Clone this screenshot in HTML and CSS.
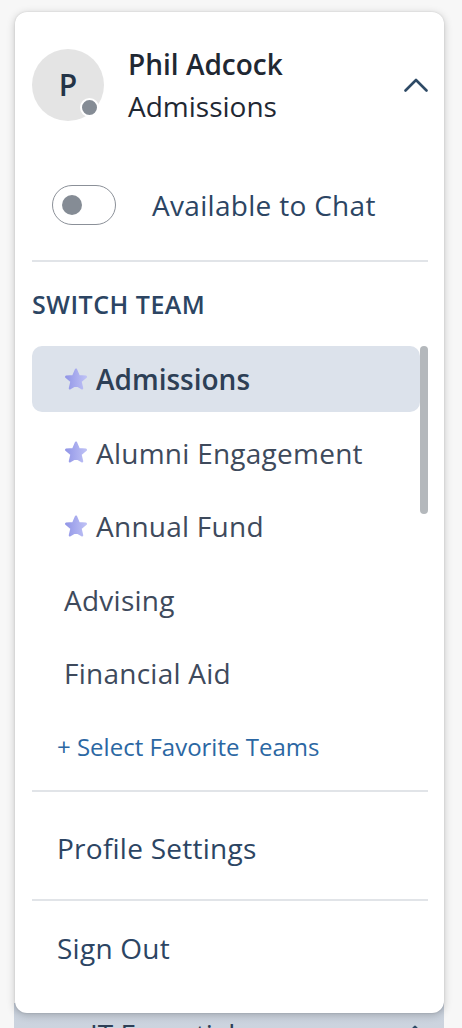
FILE: index.html
```html
<!DOCTYPE html>
<html lang="en">
<head>
<meta charset="utf-8">
<title>Profile menu</title>
<link rel="stylesheet" href="styles.css">
</head>
<body>
<svg class="defs" width="0" height="0" aria-hidden="true">
  <defs>
    <linearGradient id="starGrad" x1="0" y1="0" x2="1" y2="0">
      <stop offset="0" stop-color="#9397e7"/>
      <stop offset="1" stop-color="#bdc0f5"/>
    </linearGradient>
  </defs>
</svg>
<div class="app">
  <div class="menu">
    <div class="profile">
      <div class="avatar">P<span class="status"></span></div>
      <div class="who">
        <div class="name">Phil Adcock</div>
        <div class="team">Admissions</div>
      </div>
      <svg class="chevron" width="24" height="14" viewBox="0 0 24 14"><polyline points="1.5,12.5 12,2 22.5,12.5" fill="none" stroke="#2e4a66" stroke-width="2.6" stroke-linecap="round" stroke-linejoin="round"/></svg>
    </div>

    <div class="chat-row">
      <span class="toggle"><span class="knob"></span></span>
      <span class="chat-label">Available to Chat</span>
    </div>

    <div class="divider first"></div>

    <div class="section-title">SWITCH TEAM</div>

    <div class="team-scroll">
      <div class="team-list">
        <div class="team-item active">
          <svg class="star" width="24" height="24" viewBox="0 0 24 24"><polygon points="12,2.7 14.76,9.2 21.8,9.82 16.47,14.45 18.05,21.33 12,17.7 5.95,21.33 7.53,14.45 2.2,9.82 9.24,9.2"/></svg>
          <span>Admissions</span>
        </div>
        <div class="team-item">
          <svg class="star" width="24" height="24" viewBox="0 0 24 24"><polygon points="12,2.7 14.76,9.2 21.8,9.82 16.47,14.45 18.05,21.33 12,17.7 5.95,21.33 7.53,14.45 2.2,9.82 9.24,9.2"/></svg>
          <span>Alumni Engagement</span>
        </div>
        <div class="team-item">
          <svg class="star" width="24" height="24" viewBox="0 0 24 24"><polygon points="12,2.7 14.76,9.2 21.8,9.82 16.47,14.45 18.05,21.33 12,17.7 5.95,21.33 7.53,14.45 2.2,9.82 9.24,9.2"/></svg>
          <span>Annual Fund</span>
        </div>
        <div class="team-item"><span>Advising</span></div>
        <div class="team-item"><span>Financial Aid</span></div>
      </div>
      <div class="scrollbar"><div class="thumb"></div></div>
    </div>

    <a class="fav-link">+ Select Favorite Teams</a>

    <div class="divider"></div>
    <div class="menu-item profile-settings">Profile Settings</div>
    <div class="divider"></div>
    <div class="menu-item sign-out">Sign Out</div>
  </div>

  <div class="team-bar">
    <span>IT Essentials</span>
    <svg class="bar-chevron" width="24" height="14" viewBox="0 0 24 14"><polyline points="1.5,12.5 12,2 22.5,12.5" fill="none" stroke="#2e4a66" stroke-width="2.6" stroke-linecap="round" stroke-linejoin="round"/></svg>
  </div>
</div>
</body>
</html>
```

FILE: styles.css
```css
* { box-sizing: border-box; }

html, body {
  margin: 0;
  padding: 0;
}

body {
  background: #f7f7f7;
  font-family: "Open Sans", "Noto Sans", "Liberation Sans", sans-serif;
  color: #2c4563;
  overflow: hidden;
  height: 1028px;
}

.defs {
  position: absolute;
  width: 0;
  height: 0;
}

.app {
  padding-top: 12px;
  padding-left: 14px;
  width: 444px;
}

.menu {
  position: relative;
  z-index: 2;
  margin-left: 1px;
  width: 429px;
  background: #ffffff;
  border-radius: 12px;
  box-shadow: 0 2px 8px rgba(0, 0, 0, 0.22), 0 0 2px rgba(0, 0, 0, 0.12);
  padding: 31px 16px 0 17px;
}

/* header */
.profile {
  display: flex;
  align-items: center;
  height: 84px;
}

.avatar {
  position: relative;
  flex: none;
  width: 72px;
  height: 72px;
  border-radius: 50%;
  background: #e4e4e4;
  color: #243447;
  font-size: 30px;
  font-weight: 600;
  display: flex;
  align-items: center;
  justify-content: center;
  line-height: 1;
}

.status {
  position: absolute;
  right: 5px;
  bottom: 4px;
  width: 19px;
  height: 19px;
  border-radius: 50%;
  background: #858c95;
  border: 2.5px solid #ffffff;
}

.who {
  flex: 1;
  margin-left: 24px;
  color: #1f2833;
}

.name {
  font-size: 28px;
  font-weight: 600;
  line-height: 42px;
}

.team {
  font-size: 28px;
  line-height: 42px;
}

.chevron {
  flex: none;
}

/* chat toggle */
.chat-row {
  margin-top: 57px;
  display: flex;
  align-items: center;
  height: 42px;
  padding-left: 20px;
}

.toggle {
  width: 64px;
  height: 40px;
  border: 1px solid #8b9098;
  border-radius: 20px;
  display: flex;
  align-items: center;
  padding-left: 9px;
}

.knob {
  width: 20px;
  height: 20px;
  border-radius: 50%;
  background: #858c95;
}

.chat-label {
  margin-left: 36px;
  font-size: 28px;
  line-height: 42px;
  letter-spacing: 0.3px;
  color: #2c4563;
}

/* dividers */
.divider {
  height: 2px;
  background: #e1e4e8;
  margin-top: 25px;
}

.divider.first {
  margin-top: 34px;
}

.section-title {
  margin-top: 24px;
  font-size: 25px;
  line-height: 36px;
  font-weight: 600;
  letter-spacing: 0.5px;
  color: #2c4563;
}

/* team list */
.team-scroll {
  margin-top: 24px;
  height: 360px;
  overflow: hidden;
  display: flex;
}

.team-list {
  flex: 1;
  display: flex;
  flex-direction: column;
  gap: 7.5px;
}

.scrollbar {
  flex: none;
  width: 8px;
  display: flex;
  flex-direction: column;
}

.thumb {
  height: 168px;
  border-radius: 4px;
  background: #b4b8bc;
}

.team-item {
  flex: none;
  height: 66px;
  display: flex;
  align-items: center;
  gap: 8px;
  padding-left: 32px;
  border-radius: 10px;
  font-size: 28px;
  line-height: 42px;
  letter-spacing: 0.25px;
  color: #3e4a5c;
}

.team-item.active {
  background: #dce2eb;
  font-weight: 600;
  letter-spacing: 0;
  color: #2d3f56;
}

.star {
  flex: none;
  margin-top: -1px;
}

.star polygon {
  fill: url(#starGrad);
  stroke: url(#starGrad);
  stroke-width: 2.4;
  stroke-linejoin: round;
}

.fav-link {
  display: block;
  margin-top: 23px;
  padding-left: 25px;
  font-size: 24px;
  line-height: 36px;
  color: #2b67a3;
}

.menu-item {
  padding-left: 25px;
  font-size: 28px;
  line-height: 42px;
  letter-spacing: 0.25px;
  color: #2c4563;
}

.profile-settings {
  padding-top: 35px;
  padding-bottom: 30px;
}

.sign-out {
  padding-top: 26px;
  padding-bottom: 44px;
}

.profile-settings + .divider {
  margin-top: 0;
}

/* background bar under the menu */
.team-bar {
  position: relative;
  z-index: 1;
  margin-top: -10px;
  width: 430px;
  height: 60px;
  background: linear-gradient(#bcc5d2, #cbd3de 12px, #cfd6e0);
  display: flex;
  align-items: flex-start;
  padding: 10px 0 0 76px;
  font-size: 28px;
  line-height: 42px;
  color: #2d3f56;
}

.team-bar span {
  flex: 1;
}

.bar-chevron {
  margin-top: 12px;
  margin-right: 17px;
}
```
